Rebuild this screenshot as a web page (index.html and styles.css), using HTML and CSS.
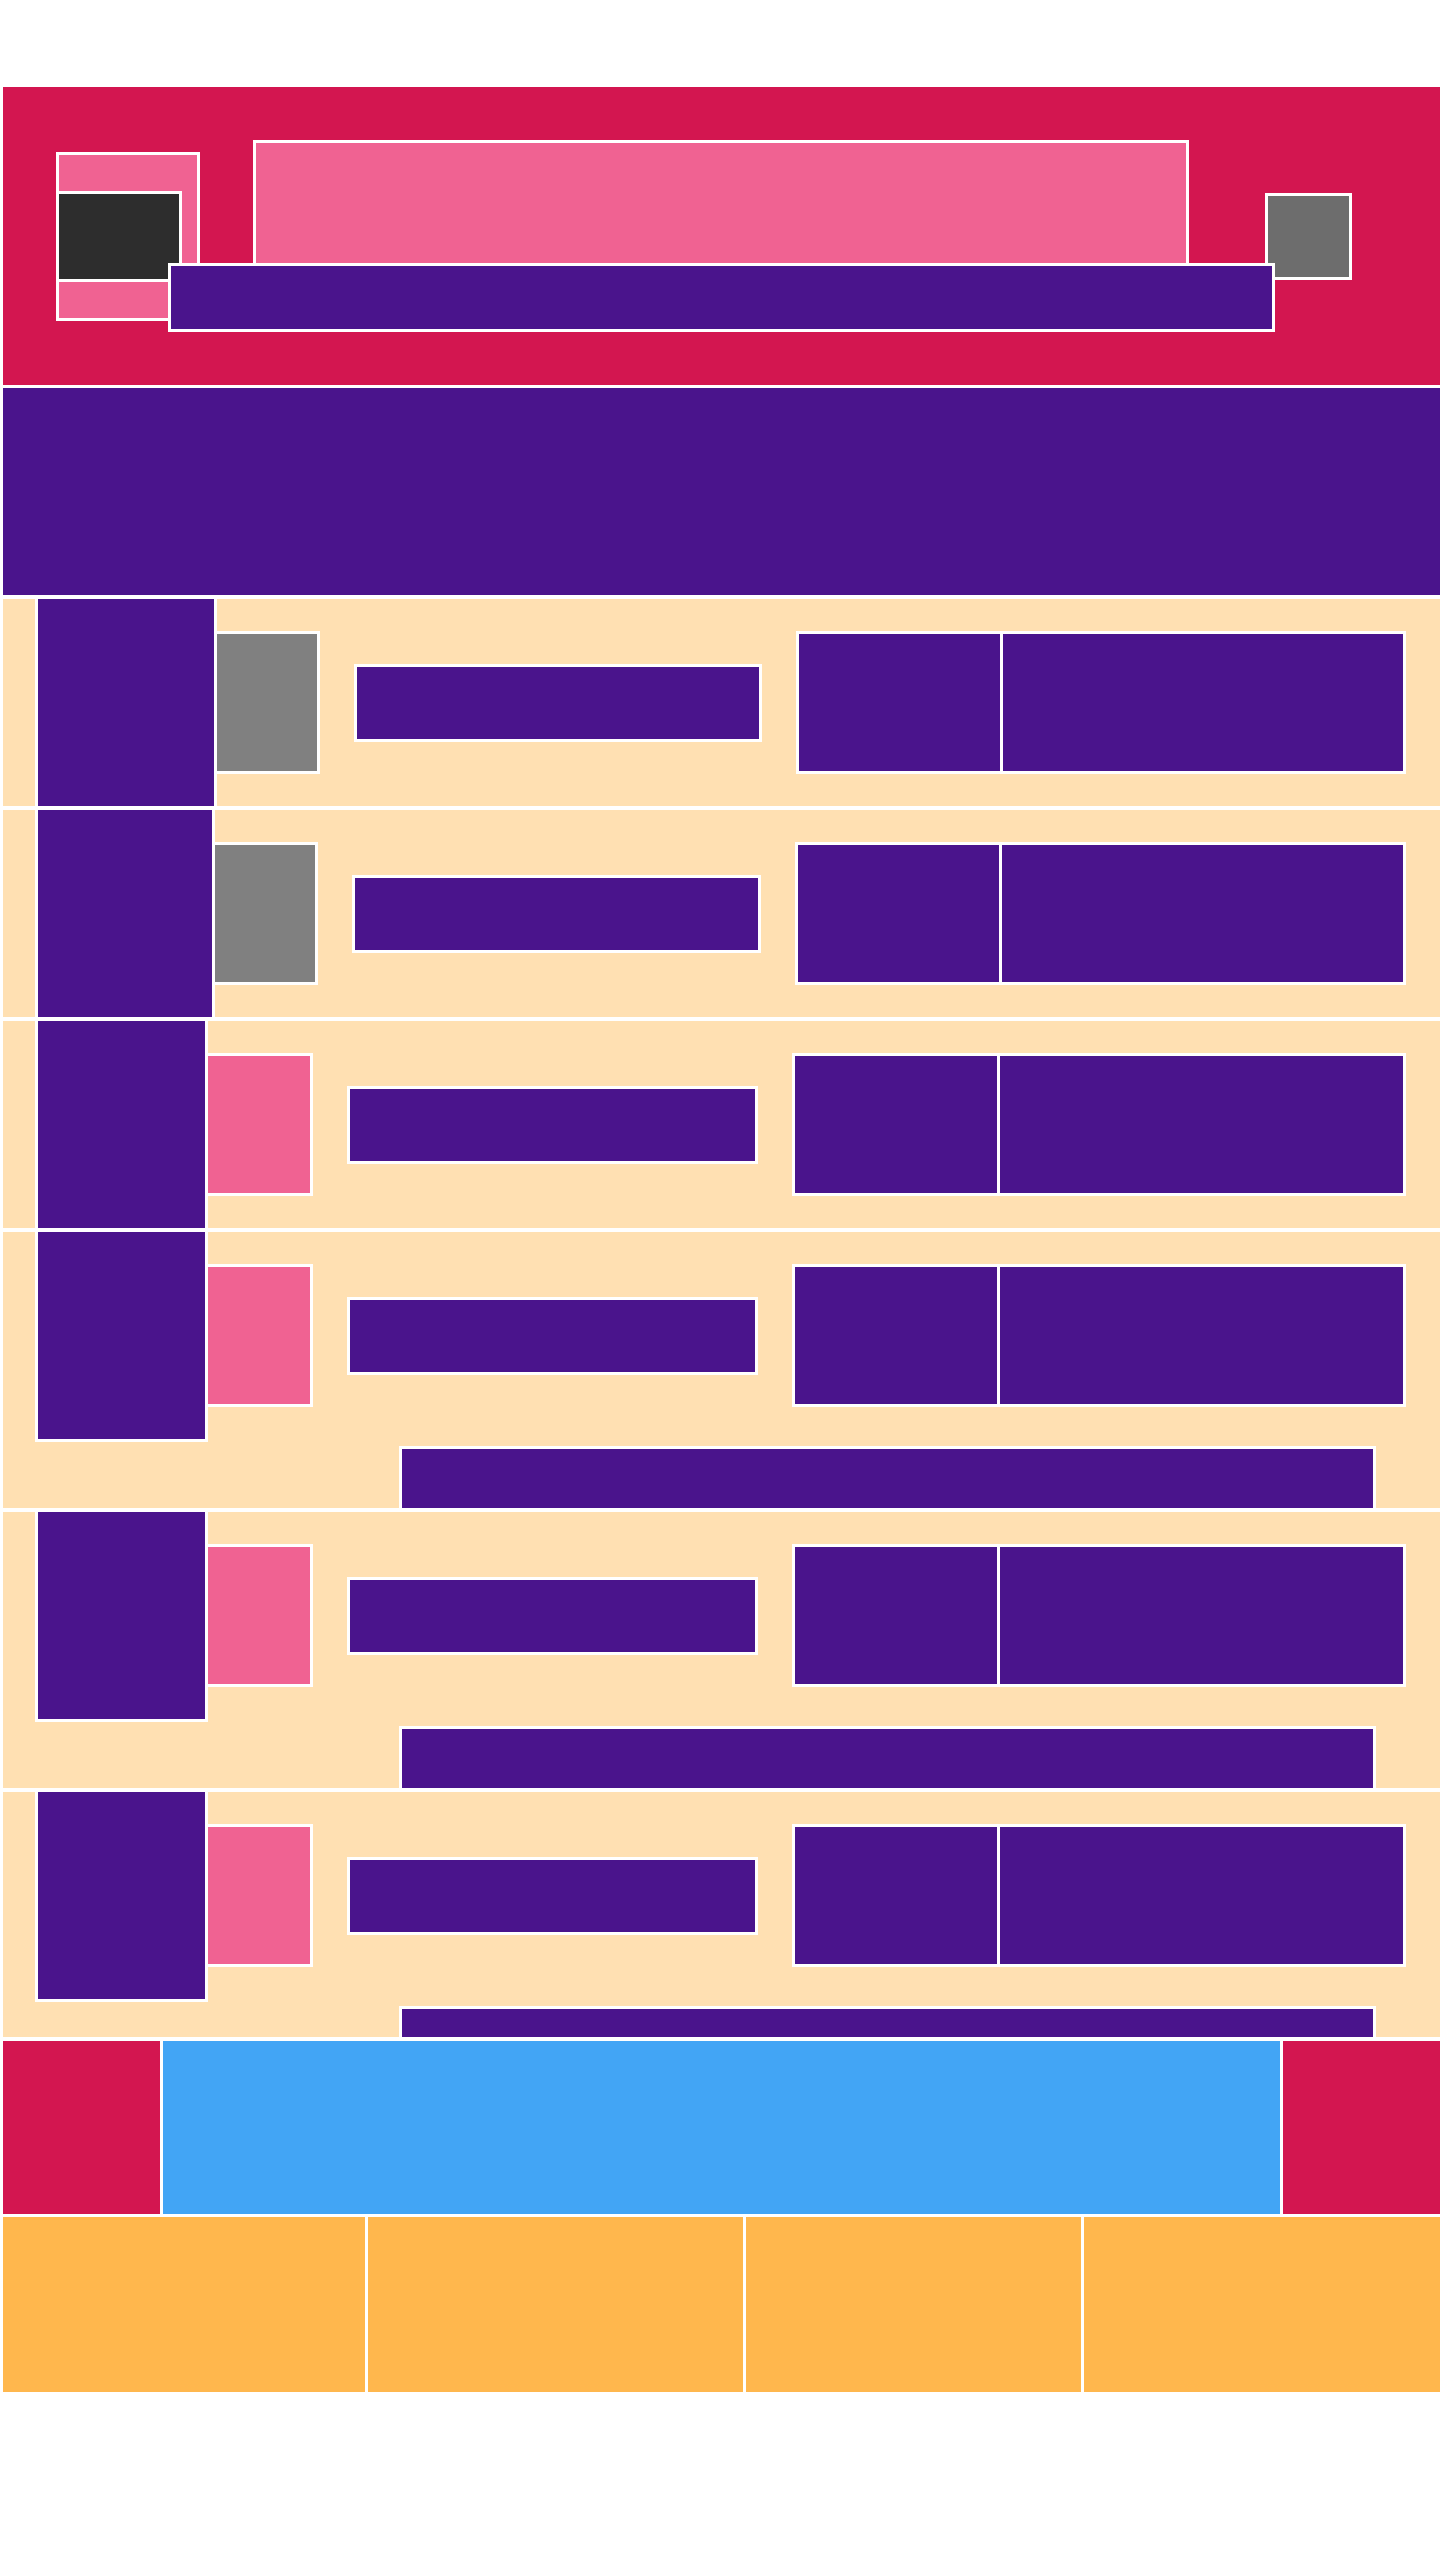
FILE: index.html
```html
<!DOCTYPE html>
<html lang="en">
<head>
    <meta charset="UTF-8" />
    <meta name="viewport" content="width=device-width, initial-scale=1.0" />
    <title>Layout</title>
    <link rel="stylesheet" href="styles.css">
</head>
<body>
    <div class="page">
        <header class="header">
            <div class="logo">
                <div class="logo-mark"></div>
            </div>
            <div class="search">
                <div class="search-bar"></div>
            </div>
            <div class="header-button"></div>
        </header>

        <section class="hero"></section>

        <div class="list">
            <div class="row">
                <div class="row-main">
                    <div class="thumb thumb-wide"></div>
                    <div class="icon icon-gray"></div>
                    <div class="bar"></div>
                    <div class="pair"><div class="pair-left"></div><div class="pair-right"></div></div>
                </div>
            </div>
            <div class="row">
                <div class="row-main">
                    <div class="thumb thumb-mid"></div>
                    <div class="icon icon-gray"></div>
                    <div class="bar"></div>
                    <div class="pair"><div class="pair-left"></div><div class="pair-right"></div></div>
                </div>
            </div>
            <div class="row">
                <div class="row-main">
                    <div class="thumb"></div>
                    <div class="icon icon-pink"></div>
                    <div class="bar"></div>
                    <div class="pair"><div class="pair-left"></div><div class="pair-right"></div></div>
                </div>
            </div>
            <div class="row row-tall">
                <div class="row-main">
                    <div class="thumb"></div>
                    <div class="icon icon-pink"></div>
                    <div class="bar"></div>
                    <div class="pair"><div class="pair-left"></div><div class="pair-right"></div></div>
                </div>
                <div class="wide-bar"></div>
            </div>
            <div class="row row-tall">
                <div class="row-main">
                    <div class="thumb"></div>
                    <div class="icon icon-pink"></div>
                    <div class="bar"></div>
                    <div class="pair"><div class="pair-left"></div><div class="pair-right"></div></div>
                </div>
                <div class="wide-bar"></div>
            </div>
            <div class="row row-tall">
                <div class="row-main">
                    <div class="thumb"></div>
                    <div class="icon icon-pink"></div>
                    <div class="bar"></div>
                    <div class="pair"><div class="pair-left"></div><div class="pair-right"></div></div>
                </div>
                <div class="wide-bar"></div>
            </div>
        </div>

        <div class="banner">
            <div class="banner-center"></div>
        </div>

        <footer class="footer">
            <div class="footer-col"></div>
            <div class="footer-col"></div>
            <div class="footer-col"></div>
            <div class="footer-col"></div>
        </footer>
    </div>
</body>
</html>
```

FILE: styles.css
```css
* {
    box-sizing: border-box;
}

body {
    margin: 0;
    background-color: #ffffff;
    font-family: "Liberation Sans", Arial, sans-serif;
}

.page {
    width: 1437px;
    margin-left: 3px;
    padding-top: 87px;
    display: flex;
    flex-direction: column;
}

/* header */
.header {
    height: 298px;
    background-color: #d31650;
    display: flex;
    align-items: center;
    padding-left: 53px;
}

.logo {
    width: 144px;
    height: 169px;
    background-color: #f06292;
    border: 3px solid #ffffff;
}

.logo-mark {
    width: 126px;
    height: 91px;
    margin-left: -3px;
    margin-top: 36px;
    background-color: #2d2d2d;
    border: 3px solid #ffffff;
}

.search {
    position: relative;
    width: 936px;
    height: 192px;
    margin-left: 53px;
    background-color: #f06292;
    border: 3px solid #ffffff;
}

.search-bar {
    position: absolute;
    left: -88px;
    top: 120px;
    width: 1107px;
    height: 69px;
    background-color: #4a148c;
    border: 3px solid #ffffff;
}

.header-button {
    width: 87px;
    height: 87px;
    margin-left: 76px;
    background-color: #6d6d6d;
    border: 3px solid #ffffff;
}

.hero {
    height: 207px;
    margin-top: 3px;
    background-color: #4a148c;
}

/* list */
.list {
    height: 1438px;
    margin-top: 4px;
    overflow: hidden;
    display: flex;
    flex-direction: column;
    gap: 4px;
}

.row {
    flex-shrink: 0;
    background-color: #ffe0b2;
}

.row-tall {
    height: 276px;
}

.row-main {
    height: 207px;
    display: flex;
    align-items: center;
    padding-left: 32px;
    padding-right: 34px;
}

.thumb {
    align-self: stretch;
    width: 173px;
    flex-shrink: 0;
    background-color: #4a148c;
    border-left: 3px solid #ffffff;
    border-right: 3px solid #ffffff;
}

.thumb-wide {
    width: 182px;
}

.thumb-mid {
    width: 180px;
}

.row-tall .thumb {
    align-self: flex-start;
    height: 210px;
    border-bottom: 3px solid #ffffff;
}

.icon {
    width: 108px;
    height: 143px;
    flex-shrink: 0;
    margin-left: -3px;
    border: 3px solid #ffffff;
}

.icon-gray {
    width: 106px;
    background-color: #808080;
}

.icon-pink {
    background-color: #f06292;
}

.bar {
    flex: 2;
    height: 78px;
    margin-left: 34px;
    background-color: #4a148c;
    border: 3px solid #ffffff;
}

.pair {
    flex: 3;
    height: 143px;
    margin-left: 34px;
    display: flex;
    gap: 3px;
    background-color: #ffffff;
    border: 3px solid #ffffff;
}

.pair-left {
    flex: 1;
    background-color: #4a148c;
}

.pair-right {
    flex: 2;
    background-color: #4a148c;
}

.wide-bar {
    width: 977px;
    height: 62px;
    margin-top: 7px;
    margin-left: 396px;
    background-color: #4a148c;
    border: 3px solid #ffffff;
    border-bottom: none;
}

/* bottom */
.banner {
    height: 173px;
    margin-top: 4px;
    background-color: #d31650;
    display: flex;
}

.banner-center {
    width: 1123px;
    margin-left: 157px;
    background-color: #42a5f5;
    border-left: 3px solid #ffffff;
    border-right: 3px solid #ffffff;
}

.footer {
    height: 175px;
    margin-top: 3px;
    display: grid;
    grid-template-columns: 362px 375px 335px 1fr;
    gap: 3px;
}

.footer-col {
    background-color: #ffb74d;
}
```
